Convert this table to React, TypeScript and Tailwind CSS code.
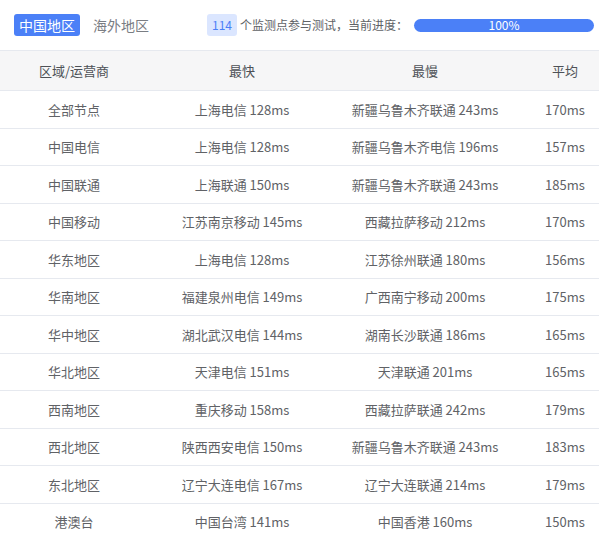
const rows: [string, string, string, string][] = [
  ["全部节点", "上海电信 128ms", "新疆乌鲁木齐联通 243ms", "170ms"],
  ["中国电信", "上海电信 128ms", "新疆乌鲁木齐电信 196ms", "157ms"],
  ["中国联通", "上海联通 150ms", "新疆乌鲁木齐联通 243ms", "185ms"],
  ["中国移动", "江苏南京移动 145ms", "西藏拉萨移动 212ms", "170ms"],
  ["华东地区", "上海电信 128ms", "江苏徐州联通 180ms", "156ms"],
  ["华南地区", "福建泉州电信 149ms", "广西南宁移动 200ms", "175ms"],
  ["华中地区", "湖北武汉电信 144ms", "湖南长沙联通 186ms", "165ms"],
  ["华北地区", "天津电信 151ms", "天津联通 201ms", "165ms"],
  ["西南地区", "重庆移动 158ms", "西藏拉萨联通 242ms", "179ms"],
  ["西北地区", "陕西西安电信 150ms", "新疆乌鲁木齐联通 243ms", "183ms"],
  ["东北地区", "辽宁大连电信 167ms", "辽宁大连联通 214ms", "179ms"],
  ["港澳台", "中国台湾 141ms", "中国香港 160ms", "150ms"],
];

const cols = "grid grid-cols-[148px_188px_178px_85px]";

export default function App() {
  return (
    <div
      className="w-[599px] h-[540px] overflow-hidden bg-white text-[13px] text-[#606266]"
      style={{ fontFamily: '"Noto Sans CJK SC", sans-serif' }}
    >
      <div className="h-[50px] flex items-center pl-[14px]">
        <div className="h-[22px] px-[5px] flex items-center rounded-[3px] bg-[#4b80f7] text-white text-[14px]">
          中国地区
        </div>
        <div className="ml-[13px] text-[14px] text-[#7a7d83]">海外地区</div>
        <div className="ml-[58px] h-[22px] w-[30px] flex items-center justify-center rounded-[3px] bg-[#dbe6ff] text-[#4b80f7] text-[12px]">
          114
        </div>
        <div className="ml-[3px] text-[12px] text-[#606266]">个监测点参与测试，当前进度：</div>
        <div className="ml-[6px] w-[180px] h-[13px] rounded-full bg-[#4b80f7] flex items-center justify-center text-white text-[12px] leading-none">
          100%
        </div>
      </div>
      <div className={`${cols} h-[41px] items-center bg-[#f6f6f7] border-y border-[#e6e9ef] text-[#4d5156]`}>
        <div className="text-center">区域/运营商</div>
        <div className="text-center">最快</div>
        <div className="text-center">最慢</div>
        <div className="text-center pl-[17px]">平均</div>
      </div>
      {rows.map((r) => (
        <div key={r[0]} className={`${cols} h-[37.5px] items-center border-b border-[#e6e9ef]`}>
          <div className="text-center">{r[0]}</div>
          <div className="text-center">{r[1]}</div>
          <div className="text-center">{r[2]}</div>
          <div className="text-center pl-[17px]">{r[3]}</div>
        </div>
      ))}
    </div>
  );
}
